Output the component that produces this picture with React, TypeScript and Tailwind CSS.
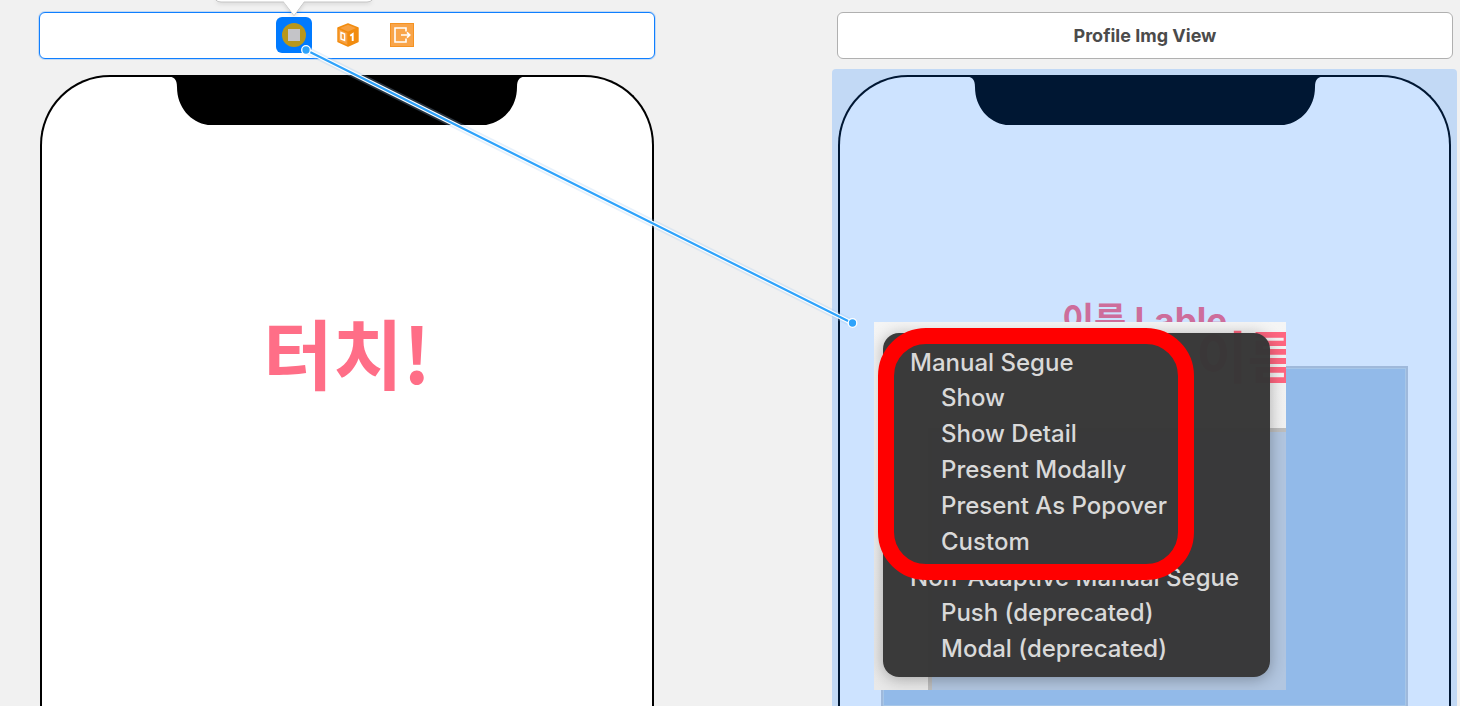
import React from 'react';

const manualSegues = ['Show', 'Show Detail', 'Present Modally', 'Present As Popover', 'Custom'];
const deprecatedSegues = ['Push (deprecated)', 'Modal (deprecated)'];

function Notch({className}: { className: string }) {
    return (
        <svg viewBox="0 0 360 50" className={`mx-auto block h-[50px] w-[360px] -mt-0.5 ${className}`} fill="currentColor" aria-hidden="true">
            <path d="M0 0 V1.500 C7 1.500 10 4 10 12 C10 35 27 50.500 47 50.500 H313 C333 50.500 350 35 350 12 C350 4 353 1.500 360 1.500 V0 Z"/>
        </svg>
    );
}

function ControllerIcon() {
    return (
        <svg viewBox="0 0 24 24" className="h-6 w-6" aria-hidden="true">
            <circle cx="12" cy="12" r="12" fill="#b8971c"/>
            <rect x="6" y="6" width="12" height="12" fill="#c4c4c8"/>
        </svg>
    );
}

function ResponderIcon() {
    return (
        <svg viewBox="0 0 24 24" className="h-6 w-6" aria-hidden="true">
            <path d="M12 1 L22 5 V18.500 L12 23 L2 18.500 V5 Z" fill="#f7a040" stroke="#f28c0f" strokeWidth="1.400" strokeLinejoin="round"/>
            <path d="M2 5 L12 9.500 L22 5 M12 9.500 V23" fill="none" stroke="#f28c0f" strokeWidth="1.400"/>
            <path d="M12 9.500 L22 5 V18.500 L12 23 Z" fill="#f28c0f"/>
            <path d="M5 9.500 L8.600 11 V17.500 L5 16 Z" fill="none" stroke="#fff" strokeWidth="1.400"/>
            <path d="M14.200 12.700 L16.700 11 V18" fill="none" stroke="#fff" strokeWidth="1.900"/>
        </svg>
    );
}

function ExitIcon() {
    return (
        <svg viewBox="0 0 24 24" className="h-6 w-6" aria-hidden="true">
            <rect x="0.500" y="0.500" width="23" height="23" fill="#f9a54a" stroke="#f59322"/>
            <path d="M16 8.500 V5 H5 V19 H16 V15.500" fill="none" stroke="#fff" strokeWidth="1.600"/>
            <path d="M11 12 H19 M17 9.300 L19.800 12 L17 14.700" fill="none" stroke="#fff" strokeWidth="1.600"/>
        </svg>
    );
}

function Callout() {
    return (
        <svg viewBox="0 0 164 20" className="absolute left-[212px] top-0 h-5 w-[164px] drop-shadow-sm" aria-hidden="true">
            <path d="M2 -6 Q2 2 9 2 H72 L82 15.500 L92 2 H155 Q162 2 162 -6 Z" fill="#fff" stroke="#c4c4c4"/>
            <path d="M71 0 H93 L82 15 L72 2 Z" fill="#fff"/>
        </svg>
    );
}

function SegueWire() {
    return (
        <svg viewBox="0 0 560 290" className="pointer-events-none absolute left-[299px] top-[42px] h-[290px] w-[560px]" aria-hidden="true">
            <path d="M7 8 L553 281" stroke="#9cc8f5" strokeOpacity="0.25" strokeWidth="8"/>
            <path d="M7 8 L553 281" stroke="#fff" strokeWidth="4.500"/>
            <path d="M7 8 L553 281" stroke="#2ea3fb" strokeWidth="2.200"/>
            <circle cx="7" cy="8" r="4.300" fill="#2ea3fb" stroke="#fff" strokeWidth="1.300"/>
            <circle cx="553.500" cy="281" r="4.300" fill="#2ea3fb" stroke="#fff" strokeWidth="1.300"/>
        </svg>
    );
}

function SegueItem({label}: { label: string }) {
    return (
        <li>
            <button type="button" className="block h-9 w-full pl-[58px] text-left leading-9">{label}</button>
        </li>
    );
}

function SegueMenu() {
    return (
        <div className="absolute left-[37px] top-[310px] h-[368px] w-[412px] overflow-hidden bg-linear-to-b from-[#f5f5f5] to-[#e9e9e9]">
            {/* enlarged preview of the canvas behind the menu */}
            <div className="flex h-full flex-col">
                <p className="h-[106px] whitespace-nowrap pl-[322px] text-[56px] font-bold leading-[72px] text-[#ff6680]">이름</p>
                <div className="ml-[54px] flex-1 border-l-4 border-t-4 border-[#bebebe] bg-[#b2c6e0]"/>
            </div>

            <div className="absolute left-[9px] top-[11px] w-[387px] rounded-[16px] bg-[#363636]/98 pb-[10px] pt-3 font-['Inter',sans-serif] text-[24px] font-medium text-[#d9d9d9] shadow-[0_2px_16px_rgba(0,0,0,0.3)]">
                <h2 className="h-[35px] pl-[27px] leading-[35px]">Manual Segue</h2>
                <ul>
                    {manualSegues.map((label) => <SegueItem key={label} label={label}/>)}
                </ul>
                <h2 className="h-[35px] whitespace-nowrap pl-[27px] leading-[35px]">Non-Adaptive Manual Segue</h2>
                <ul>
                    {deprecatedSegues.map((label) => <SegueItem key={label} label={label}/>)}
                </ul>
            </div>

            <div className="pointer-events-none absolute left-1 top-1.5 h-[252px] w-[316px] rounded-[48px] border-[16px] border-[#ff0000]"/>
        </div>
    );
}

export default function App() {
    return (
        <main className="relative flex min-h-screen gap-[182px] overflow-hidden bg-[#f1f1f1] pl-[39px] pr-[7px] pt-3 font-['Inter','Noto_Sans_CJK_KR',sans-serif]">

            <section className="flex min-w-0 flex-1 flex-col">
                <header className="flex h-[47px] items-center justify-center gap-[18px] rounded-md border border-[#0f7fff] bg-white pb-px pl-0.5 shadow-[0_0_0_1px_rgba(15,127,255,0.2)]">
                    <button type="button" aria-label="View Controller" className="flex h-9 w-9 items-center justify-center rounded-md bg-[#007aff]">
                        <ControllerIcon/>
                    </button>
                    <button type="button" aria-label="First Responder" className="flex h-9 w-9 items-center justify-center">
                        <ResponderIcon/>
                    </button>
                    <button type="button" aria-label="Exit" className="flex h-9 w-9 items-center justify-center">
                        <ExitIcon/>
                    </button>
                </header>

                <div className="mx-px mt-4 flex-1 rounded-t-[70px] border-2 border-b-0 border-black bg-white">
                    <Notch className="text-black"/>
                    <p className="pt-[168px] text-center font-['Noto_Sans_CJK_KR',sans-serif] text-[76px] font-bold leading-[116px] text-[#ff6e87]">터치!</p>
                </div>
            </section>

            <section className="relative flex min-w-0 flex-1 flex-col">
                <header className="flex h-[47px] items-center justify-center rounded-md border border-[#b0b0b0] bg-white">
                    <h1 className="text-[18px] font-bold text-[#4b4b4b]">Profile Img View</h1>
                </header>

                <div className="-ml-[5px] -mr-1 mt-[10px] flex flex-1 flex-col rounded-t-sm bg-[#c2d9f5] px-1.5 pt-1.5">
                    <div className="flex flex-1 flex-col rounded-t-[70px] border-2 border-b-0 border-[#001733] bg-[#cde3ff]">
                        <Notch className="text-[#001733]"/>
                        <p className="pt-[171px] text-center text-[35px] font-bold leading-[48px] text-[#cd6d9b]">이름 Lable</p>
                        <div className="mx-[41px] mt-[22px] flex-1 border-2 border-b-0 border-[#9fb9db] bg-[#92bae9] shadow-[inset_0_0_0_1px_#a6c6e8]"/>
                    </div>
                </div>

                <SegueMenu/>
            </section>

            <Callout/>
            <SegueWire/>
        </main>
    );
}
